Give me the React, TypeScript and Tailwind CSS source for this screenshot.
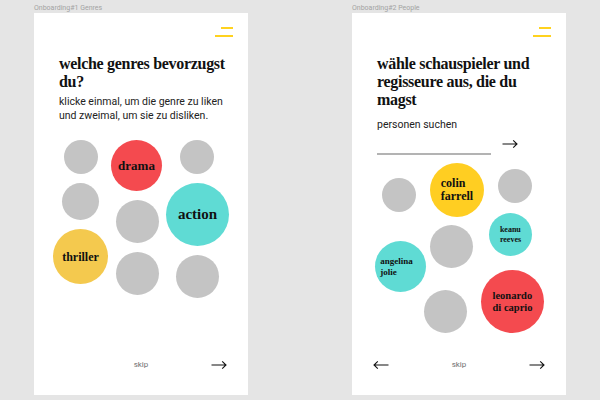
import React from "react";

type Bubble = {
  left: number;
  top: number;
  size: number;
  color: string;
  lines?: string[];
  text?: string;
};

const serif = { fontFamily: '"Liberation Serif", "DejaVu Serif", serif' };

const genres: Bubble[] = [
  { left: 30, top: 127, size: 34, color: "bg-[#c4c4c4]" },
  { left: 77, top: 127, size: 51, color: "bg-[#f44a4f]", lines: ["drama"], text: "text-[13px]" },
  { left: 146, top: 127, size: 34, color: "bg-[#c4c4c4]" },
  { left: 28, top: 170, size: 37, color: "bg-[#c4c4c4]" },
  { left: 82, top: 187, size: 43, color: "bg-[#c4c4c4]" },
  { left: 132, top: 170, size: 63, color: "bg-[#5fdbd4]", lines: ["action"], text: "text-[15px]" },
  { left: 19, top: 216, size: 55, color: "bg-[#f4c94e]", lines: ["thriller"], text: "text-[12px]" },
  { left: 82, top: 239, size: 43, color: "bg-[#c4c4c4]" },
  { left: 142, top: 242, size: 43, color: "bg-[#c4c4c4]" },
];

const people: Bubble[] = [
  { left: 30, top: 165, size: 34, color: "bg-[#c4c4c4]" },
  { left: 78, top: 150, size: 54, color: "bg-[#ffce22]", lines: ["colin", "farrell"], text: "text-[12px] leading-[13px]" },
  { left: 146, top: 156, size: 34, color: "bg-[#c4c4c4]" },
  { left: 137, top: 200, size: 43, color: "bg-[#5fdbd4]", lines: ["keanu", "reeves"], text: "text-[8px] leading-[10px]" },
  { left: 78, top: 212, size: 43, color: "bg-[#c4c4c4]" },
  { left: 23, top: 228, size: 51, color: "bg-[#5fdbd4]", lines: ["angelina", "jolie"], text: "text-[9px] leading-[11px] pr-[8px]" },
  { left: 129, top: 257, size: 63, color: "bg-[#f44a4f]", lines: ["leonardo", "di caprio"], text: "text-[10.5px] leading-[12px]" },
  { left: 72, top: 277, size: 43, color: "bg-[#c4c4c4]" },
];

function Arrow({ left = false }: { left?: boolean }) {
  return (
    <svg width="16" height="10" viewBox="0 0 16 10" className={left ? "rotate-180" : ""}>
      <path d="M0.5 5H15M11.2 1.4L15 5L11.2 8.6" fill="none" stroke="#111" strokeWidth="1.1" />
    </svg>
  );
}

function Hamburger() {
  return (
    <div className="flex flex-col items-end gap-[5.5px] pt-[14px] pr-[15px]">
      <div className="w-[12px] h-[2px] bg-[#ffd21f]" />
      <div className="w-[18px] h-[2px] bg-[#ffd21f]" />
    </div>
  );
}

function Bubbles({ items }: { items: Bubble[] }) {
  return (
    <>
      {items.map((b, i) => (
        <div
          key={i}
          className={`absolute rounded-full flex items-center justify-center ${b.color}`}
          style={{ left: b.left, top: b.top, width: b.size, height: b.size }}
        >
          {b.lines && (
            <div className={`text-left font-bold text-[#111] ${b.text}`} style={serif}>
              {b.lines.map((l) => (
                <div key={l}>{l}</div>
              ))}
            </div>
          )}
        </div>
      ))}
    </>
  );
}

function Artboard({
  label,
  children,
  bubbles,
  back,
}: {
  label: string;
  children: React.ReactNode;
  bubbles: Bubble[];
  back?: boolean;
}) {
  return (
    <div className="flex flex-col">
      <p className="text-[7px] leading-[9px] text-[#a3a3a3] h-[9px]">{label}</p>
      <div className="relative w-[214px] h-[382px] bg-white flex flex-col">
        <Hamburger />
        <div className="px-[25px] mt-[18px]">{children}</div>
        <Bubbles items={bubbles} />
        <div className="mt-auto flex items-center justify-between px-[21px] pb-[25px] h-[10px] box-content">
          {back ? <Arrow left /> : <div className="w-[16px]" />}
          <span className="text-[8px] text-[#707070]">skip</span>
          <Arrow />
        </div>
      </div>
    </div>
  );
}

export default function App() {
  return (
    <div
      className="w-[600px] h-[400px] bg-[#e5e5e5] flex gap-[104px] pl-[34px] pt-[4px] overflow-hidden"
      style={{ fontFamily: 'Roboto, "Liberation Sans", sans-serif' }}
    >
      <Artboard label="Onboarding#1 Genres" bubbles={genres}>
        <h1 className="w-[175px] text-[16px] leading-[18px] font-bold text-[#111] tracking-[-0.3px]" style={serif}>
          welche genres bevorzugst du?
        </h1>
        <p className="mt-[4px] text-[10.5px] leading-[14px] text-[#222]">
          klicke einmal, um die genre zu liken und zweimal, um sie zu disliken.
        </p>
      </Artboard>
      <Artboard label="Onboarding#2 People" bubbles={people} back>
        <h1 className="w-[160px] text-[16px] leading-[18px] font-bold text-[#111] tracking-[-0.3px]" style={serif}>
          wähle schauspieler und regisseure aus, die du magst
        </h1>
        <p className="mt-[9px] text-[10.5px] leading-[14px] text-[#222]">personen suchen</p>
        <div className="flex items-start mt-[7px]">
          <div className="w-[114px] h-[2px] bg-[#b3b3b3] mt-[14px]" />
          <div className="ml-[11px]">
            <Arrow />
          </div>
        </div>
      </Artboard>
    </div>
  );
}
